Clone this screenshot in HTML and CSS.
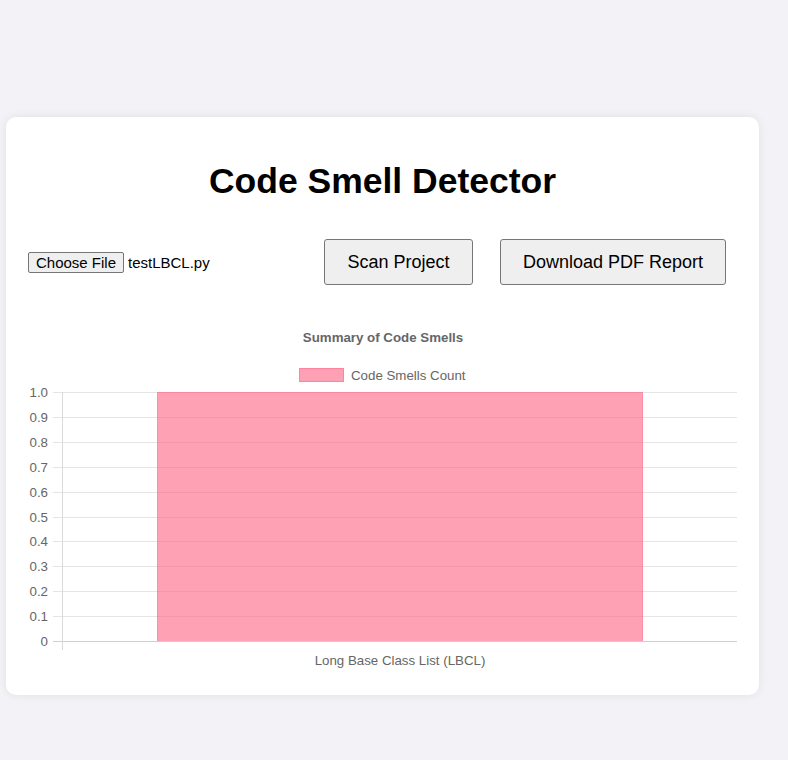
FILE: index.html
```html
<!DOCTYPE html>
<html>
<head>
<meta charset="utf-8">
<link rel="stylesheet" href="styles.css">
</head>
<body>
<div class="card">
  <h1 class="title">Code Smell Detector</h1>
  <div class="controls">
    <div class="file">
      <button class="file-btn">Choose File</button>
      <span class="file-name">testLBCL.py</span>
    </div>
    <button class="btn scan">Scan Project</button>
    <button class="btn download">Download PDF Report</button>
  </div>
  <svg class="chart" width="709" height="367" viewBox="0 0 709 367">
    <text class="chart-title" x="355" y="36.5" text-anchor="middle">Summary of Code Smells</text>
    <rect class="legend-box" x="271.5" y="63.5" width="44" height="13"/>
    <text class="label" x="323" y="74.5">Code Smells Count</text>
    <g class="grid">
      <line x1="25" x2="709" y1="87.5" y2="87.5"/>
      <line x1="25" x2="709" y1="112.5" y2="112.5"/>
      <line x1="25" x2="709" y1="137.5" y2="137.5"/>
      <line x1="25" x2="709" y1="162.5" y2="162.5"/>
      <line x1="25" x2="709" y1="187.5" y2="187.5"/>
      <line x1="25" x2="709" y1="212.5" y2="212.5"/>
      <line x1="25" x2="709" y1="236.5" y2="236.5"/>
      <line x1="25" x2="709" y1="261.5" y2="261.5"/>
      <line x1="25" x2="709" y1="286.5" y2="286.5"/>
      <line x1="25" x2="709" y1="311.5" y2="311.5"/>
    </g>
    <rect class="bar" x="129.5" y="87.5" width="485" height="249"/>
    <line class="axis" x1="25" x2="709" y1="336.5" y2="336.5"/>
    <line class="axis-y" x1="34.5" x2="34.5" y1="87" y2="345"/>
    <g class="label" text-anchor="end">
      <text x="20" y="92">1.0</text>
      <text x="20" y="117">0.9</text>
      <text x="20" y="142">0.8</text>
      <text x="20" y="166.5">0.7</text>
      <text x="20" y="191.5">0.6</text>
      <text x="20" y="216.5">0.5</text>
      <text x="20" y="241">0.4</text>
      <text x="20" y="266">0.3</text>
      <text x="20" y="290.5">0.2</text>
      <text x="20" y="315.5">0.1</text>
      <text x="20" y="340.5">0</text>
    </g>
    <text class="label" x="372" y="360" text-anchor="middle">Long Base Class List (LBCL)</text>
  </svg>
</div>
</body>
</html>
```
FILE: styles.css
```css
html, body {
  margin: 0;
  padding: 0;
}
body {
  background: #f3f3f7;
  font-family: "Liberation Sans", Arial, sans-serif;
  padding: 117px 0 0 6px;
  height: 760px;
  box-sizing: border-box;
}
.card {
  width: 753px;
  box-sizing: border-box;
  background: #fff;
  border-radius: 10px;
  box-shadow: 0 0 10px rgba(0, 0, 0, 0.08);
  padding: 20px 22px 23px 22px;
}
.title {
  margin: 24px 0 0 0;
  font-size: 35.5px;
  font-weight: bold;
  text-align: center;
  color: #000;
  line-height: 41px;
}
.controls {
  display: flex;
  align-items: center;
  margin-top: 37px;
  height: 46px;
}
.file {
  display: flex;
  align-items: center;
  width: 296px;
}
.file-btn {
  font-family: "Liberation Sans", Arial, sans-serif;
  font-size: 15px;
  height: 21px;
  width: 96px;
  padding: 0;
  background: #efefef;
  border: 1px solid #767676;
  border-radius: 2px;
  color: #000;
  line-height: 17px;
}
.file-name {
  margin-left: 4px;
  font-size: 15px;
  color: #000;
}
.btn {
  font-family: "Liberation Sans", Arial, sans-serif;
  font-size: 18px;
  height: 46px;
  padding: 0;
  white-space: nowrap;
  background: #efefef;
  border: 1px solid #767676;
  border-radius: 3px;
  color: #000;
}
.scan {
  width: 149px;
}
.download {
  width: 226px;
  margin-left: 27px;
}
.chart {
  display: block;
  margin-top: 20px;
  font-family: "Liberation Sans", Arial, sans-serif;
}
.chart-title {
  font-size: 13.3px;
  font-weight: bold;
  fill: #666;
}
.label {
  font-size: 13.3px;
  fill: #666;
}
.legend-box {
  fill: rgba(255, 99, 132, 0.6);
  stroke: rgba(255, 99, 132, 0.7);
  stroke-width: 1;
}
.grid line {
  stroke: #e5e5e5;
  stroke-width: 1;
}
.bar {
  fill: rgba(255, 99, 132, 0.6);
  stroke: rgba(255, 99, 132, 0.6);
  stroke-width: 1;
}
.axis {
  stroke: #cfcfcf;
  stroke-width: 1;
}
.axis-y {
  stroke: #d9d9d9;
  stroke-width: 1;
}
```
